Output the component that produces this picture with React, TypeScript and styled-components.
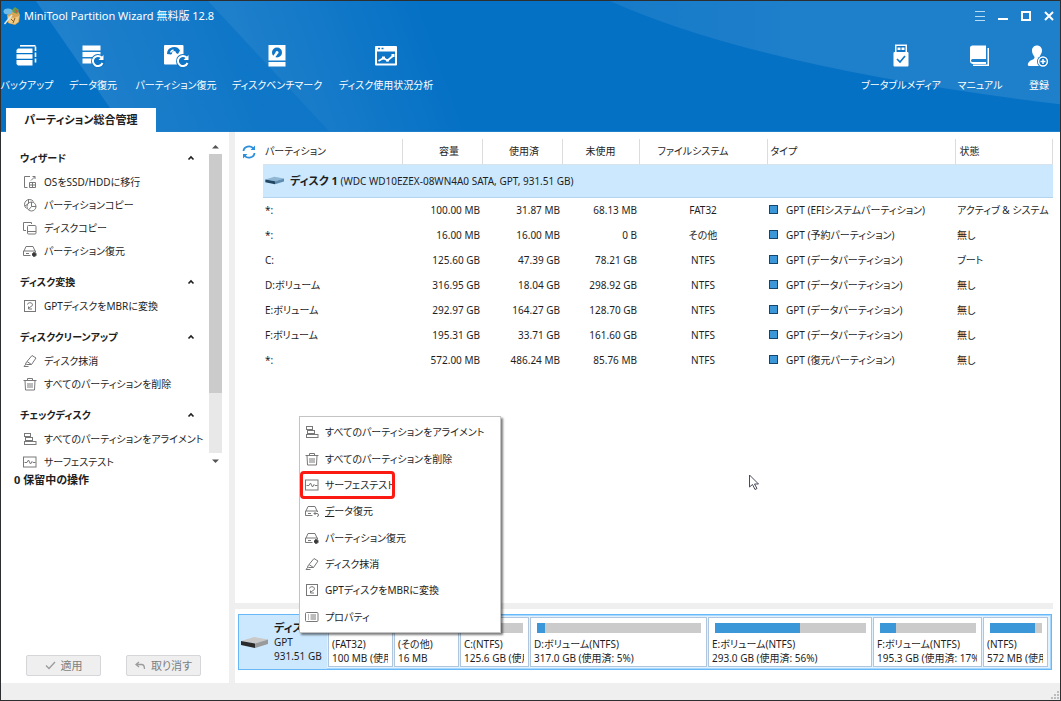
import React from "react";
import styled, { createGlobalStyle, css } from "styled-components";

const GlobalStyle = createGlobalStyle`
  *, *::before, *::after { box-sizing: border-box; }
  body {
    margin: 0;
    color: #1e1e1e;
    background: #fff;
    font-family: "Noto Sans", "Noto Sans CJK JP", sans-serif;
    font-size: 10px;
    line-height: 14px;
    font-feature-settings: "palt";
  }
  button { font: inherit; font-feature-settings: inherit; color: inherit; border: 0; padding: 0; background: none; }
  ul { list-style: none; margin: 0; padding: 0; }
  svg { display: block; flex: none; }
`;

const Window = styled.div`
  min-height: 100vh;
  display: flex;
  flex-direction: column;
  position: relative;
  border: 1px solid #2c2e30;
`;

/* ---------- header ---------- */

const Header = styled.header`
  position: relative;
  height: 131px;
  background: #0571c5;
  border-bottom: 1px solid #1f7fcb;
  color: #fff;
  display: flex;
  flex-direction: column;
`;

const Backdrop = styled.svg`
  position: absolute;
  inset: 0;
  width: 100%;
  height: 100%;
`;

const TitleBar = styled.div`
  position: relative;
  display: flex;
  align-items: center;
  height: 30px;
  padding: 0 5px 0 2px;
  gap: 3px;
`;

const Title = styled.h1`
  flex: 1;
  margin: 0;
  font-size: 11px;
  font-weight: 400;
  white-space: nowrap;
`;

const WindowButtons = styled.div`
  display: flex;
  gap: 11px;
`;

const Toolbar = styled.nav`
  position: relative;
  display: flex;
  height: 77px;
  justify-content: space-between;
  padding: 13px 1px 0 0;
`;

const ToolGroup = styled.div`
  display: flex;
  gap: 12px;
`;

const Tool = styled.button<{ $width: number }>`
  width: ${(p) => p.$width}px;
  height: 48px;
  display: flex;
  flex-direction: column;
  align-items: center;
  justify-content: space-between;
  white-space: nowrap;
`;

const Tab = styled.button`
  position: relative;
  align-self: flex-start;
  width: 150px;
  height: 24px;
  margin: auto 0 -1px 5px;
  background: #fff;
  color: #1e1e1e;
  font-size: 11px;
  font-weight: 700;
`;

/* ---------- body ---------- */

const Body = styled.div`
  flex: 1;
  display: grid;
  grid-template-columns: 228px 6px minmax(0, 1fr);
`;

const Splitter = styled.div`
  background: #efefef;
`;

const Sidebar = styled.aside`
  display: flex;
  flex-direction: column;
`;

const NavArea = styled.div`
  display: flex;
  height: 339px;
  padding-right: 7px;
`;

const NavGroups = styled.div`
  flex: 1;
  padding-top: 13px;
  overflow: hidden;
`;

const NavGroup = styled.section`
  margin-bottom: 7px;
`;

const NavHeading = styled.button`
  display: flex;
  justify-content: space-between;
  align-items: center;
  width: 100%;
  height: 25px;
  padding: 0 14px 0 19px;
  font-weight: 700;
`;

const NavItem = styled.button`
  display: flex;
  align-items: center;
  gap: 7px;
  height: 23px;
  padding-left: 22px;
  white-space: nowrap;
`;

const ScrollBar = styled.div`
  width: 13px;
  display: flex;
  flex-direction: column;
  align-items: center;
  padding-top: 12px;
`;

const ScrollTrack = styled.div`
  width: 13px;
  height: 299px;
  margin: 5px 0 6px;
  background: #e8e8e8;
`;

const ScrollThumb = styled.div`
  height: 239px;
  background: #cbcbcb;
`;

const Pending = styled.p`
  flex: 1;
  margin: 0;
  padding: 2px 0 0 13px;
  font-size: 11px;
  font-weight: 700;
`;

const Actions = styled.div`
  display: flex;
  gap: 25px;
  padding: 0 0 7px 25px;
`;

const ActionButton = styled.button`
  display: flex;
  align-items: center;
  justify-content: center;
  gap: 5px;
  width: 75px;
  height: 21px;
  border: 1px solid #d5d5da;
  border-radius: 2px;
  background: #efefef;
  color: #7e7e7e;
  font-size: 11px;
`;

const Main = styled.main`
  display: flex;
  flex-direction: column;
  padding-right: 7px;
`;

const TableArea = styled.div`
  flex: 1;
  display: grid;
  grid-template-columns: 28px minmax(0, 1fr);
  align-items: start;
  padding-top: 7px;
`;

const RefreshButton = styled.button`
  height: 25px;
  padding-left: 7px;
`;

const Table = styled.table`
  width: 100%;
  table-layout: fixed;
  border-collapse: collapse;
  white-space: nowrap;
`;

type Align = "left" | "center" | "right";

const HeadCell = styled.th<{ $align: Align; $pad: string }>`
  height: 25px;
  padding: ${(p) => p.$pad};
  border-right: 1px solid #dcdcdc;
  border-bottom: 1px solid #d6e3ef;
  text-align: ${(p) => p.$align};
  font-weight: 400;
`;

const DiskCell = styled.td`
  height: 33px;
  padding: 0 2px;
  background: #cce8ff;
  border-bottom: 1px solid #b3d4ee;
`;

const DiskTitle = styled.div`
  display: flex;
  align-items: center;
  gap: 5px;
`;

const DiskName = styled.b`
  font-size: 11px;
`;

const Cell = styled.td<{ $align?: Align }>`
  height: 25px;
  padding: 0 2px;
  text-align: ${(p) => p.$align ?? "left"};
  overflow: hidden;
`;

const TypeLabel = styled.span`
  display: flex;
  align-items: center;
  gap: 8px;
  &::before {
    content: "";
    width: 9px;
    height: 9px;
    border: 1px solid #14456b;
    background: #3b97d8;
  }
`;

const HSplitter = styled.div`
  height: 6px;
  background: #efefef;
`;

const DiskMap = styled.section`
  display: grid;
  grid-template-columns: 88px minmax(0, 1fr);
  height: 56px;
  margin: 5px 1px 13px 3px;
  border: 1px solid #66b8f8;
  background: #e3f2ff;
  box-shadow: inset 0 0 0 1px #a9d8ff;
`;

const DiskLabel = styled.div`
  display: flex;
  align-items: center;
  gap: 5px;
  padding-left: 2px;
  background: #cce8ff;
  white-space: nowrap;
`;

const Blocks = styled.div`
  display: grid;
  grid-template-columns: 65fr 65fr 69fr 177fr 164fr 109fr 65fr;
  gap: 1px;
  padding: 2px 3px 2px 1px;
`;

const Block = styled.div`
  min-width: 0;
  border: 1px solid #b0c6de;
  background: #fff;
  padding: 5px 4px 0 3px;
  white-space: nowrap;
`;

const BlockText = styled.div`
  overflow: hidden;
`;

const Usage = styled.div`
  height: 10px;
  margin: 0 1px 4px 3px;
  background: #cbcbcb;
`;

const UsageFill = styled.div`
  height: 100%;
  background: #3b97d8;
`;

const StatusBar = styled.footer`
  display: flex;
  justify-content: flex-end;
  align-items: flex-end;
  height: 17px;
  background: #efefef;
`;

/* ---------- floating parts ---------- */

const Menu = styled.ul`
  position: absolute;
  left: 298px;
  top: 415px;
  width: 202px;
  height: 217px;
  display: grid;
  grid-auto-rows: 1fr;
  padding: 2px 0;
  border: 1px solid #c4c4c4;
  background: #fff;
  box-shadow: 2px 2px 2px rgba(0, 0, 0, 0.5);
`;

const MenuItem = styled.li<{ $marked?: boolean }>`
  position: relative;
  display: flex;
  ${(p) =>
    p.$marked &&
    css`
      &::after {
        content: "";
        position: absolute;
        inset: -1px auto -1px 0;
        width: 95px;
        border: 3px solid #fb1a12;
        border-radius: 4px;
        pointer-events: none;
      }
    `}
`;

const MenuButton = styled.button`
  flex: 1;
  display: flex;
  align-items: center;
  gap: 6px;
  padding-left: 5px;
  white-space: nowrap;
`;

const Pointer = styled.svg`
  position: absolute;
  left: 747px;
  top: 473px;
`;

/* ---------- line icons ---------- */

type IconName = "migrate" | "pcopy" | "dcopy" | "precover" | "drecover" | "convert" | "wipe" | "trash" | "align" | "surface" | "props";

const glyphs: Record<IconName, React.ReactNode> = {
  migrate: (
    <>
      <path d="M7 1.5H1.5v11h3" />
      <path d="M8 5.500l4-4M9.5 1.500h2.500V4M6.500 7.500h6v5h-6zM6.500 10h6M9.500 7.500v5" />
    </>
  ),
  pcopy: (
    <>
      <path d="M3.500 10.500A5 5 0 1 1 10.500 3.500" />
      <circle cx="8.500" cy="8.500" r="4.500" />
      <path d="M8.500 4v4.500H13M8.500 8.500L5.500 12M5.500 1v4.500L2 8" />
    </>
  ),
  dcopy: (
    <>
      <path d="M3 9.500H.500v-8h8V3" />
      <rect x="4.500" y="4.500" width="8.500" height="8.500" rx="1" />
      <path d="M4.500 10.500H13" />
    </>
  ),
  precover: (
    <>
      <path d="M1 7l2-4.500h7L12 7M.500 7v4.500h7M.500 7H12.500v1.500M3 9.500h3" />
      <path d="M9 10.500h4.500M11.200 8.300v4.400" stroke="#3a3a3a" strokeWidth="2.400" />
    </>
  ),
  drecover: (
    <>
      <path d="M1 7l2-4.500h7L12 7M.500 7v4.500h7M.500 7H12.500v1M3 9.500h3" />
      <path d="M9 9.500h3a1.500 1.500 0 0 1 0 3M9 9.500L10.500 8M9 9.500l1.500 1.500" />
    </>
  ),
  convert: (
    <>
      <rect x="1.500" y="1.500" width="11" height="11" />
      <path d="M4.500 5.500a2.500 2 0 1 1 3.500 2L6 9M5.500 7.500V10H9" />
    </>
  ),
  wipe: <path d="M4 7.500L9 1.500l4 2.500-4.500 6.500H4L2.500 9.500zM4 7.500l4.500 3M3 10L1 12.500H5.500" />,
  trash: (
    <>
      <path d="M.500 3.500h13M4.500 3.500v-2h5v2M2 3.500l.500 9.500h9l.500-9.500" />
      <path d="M5 6v5M7 6v5M9 6v5" />
    </>
  ),
  align: (
    <>
      <rect x="1.500" y="1.500" width="6" height="3" />
      <rect x="2.500" y="5.500" width="7" height="3" />
      <rect x="1.500" y="9.500" width="11.500" height="3" />
    </>
  ),
  surface: (
    <>
      <rect x=".500" y="2" width="12.500" height="10" />
      <path d="M1.500 7.500h2.500l1.500-2.500 2 4 1.500-2.500 1 1h2.500" />
    </>
  ),
  props: (
    <>
      <rect x=".500" y="2.500" width="12.500" height="9" rx="1" />
      <path d="M3 5h1M3 7h1M3 9h1M5.500 5H11M5.500 7H11M5.500 9H11" />
    </>
  ),
};

const LineIcon = ({ name }: { name: IconName }) => (
  <svg width="14" height="14" viewBox="0 0 14 14" fill="none" stroke="#787878" strokeWidth="1" aria-hidden="true">
    {glyphs[name]}
  </svg>
);

const Chevron = () => (
  <svg width="8" height="6" viewBox="0 0 8 6" fill="none" stroke="#1e1e1e" strokeWidth="1.600">
    <path d="M1.500 4.500L4 2l2.500 2.500" />
  </svg>
);

/* ---------- toolbar icons ---------- */

const BLUE = "#0f75c7";

const toolIcons = {
  backup: (
    <>
      <path d="M5 1.800h15.500" fill="none" stroke="#fff" strokeWidth="1.600" />
      <path d="M20.500 2.500v4.500M20.500 8.500V13M20.500 14.500V18.500" fill="none" stroke="#fff" strokeWidth="1.600" />
      <path d="M3 4.500h14.500v4.500H1.500V6zM1.500 10.200h16v4.600h-16zM1.500 16h16v5.500H3l-1.500-1.500z" fill="#fff" />
    </>
  ),
  data: (
    <>
      <path d="M1.500 1.500h18v5h-18zM1.500 8h18v5h-18zM1.500 14.500h11v5h-11z" fill="#fff" />
      <circle cx="17" cy="17" r="7" fill={BLUE} />
      <path d="M20.500 13.500a5 5 0 1 0 1 5.500" fill="none" stroke="#fff" strokeWidth="2" />
      <path d="M22.500 11v5H17.500z" fill="#fff" />
    </>
  ),
  partition: (
    <>
      <rect x="0" y="1" width="19.500" height="19.500" rx="1" fill="#fff" />
      <path d="M3 10a7 7 0 0 1 13-3.500L14 10l-4-2-3 2.500z" fill={BLUE} />
      <path d="M6.500 8.500a4.500 4.500 0 0 1 3-2.500" fill="none" stroke="#fff" strokeWidth="1.500" />
      <circle cx="10" cy="9" r="2" fill="#fff" />
      <circle cx="19" cy="17" r="7" fill={BLUE} />
      <path d="M22.500 13.500a5 5 0 1 0 1 5.500" fill="none" stroke="#fff" strokeWidth="2" />
      <path d="M24.500 11v5H19.500z" fill="#fff" />
    </>
  ),
  bench: (
    <>
      <path d="M3.500 1h17v15.500h-17zM3.500 18h17v4.500h-17z" fill="#fff" />
      <circle cx="12" cy="8.500" r="5" fill={BLUE} />
      <path d="M11.500 9.500L8.500 13.500" stroke="#fff" strokeWidth="2.500" />
      <circle cx="12" cy="8.500" r="1.500" fill="#fff" />
    </>
  ),
  usage: (
    <>
      <rect x="1" y="2" width="22" height="19.500" rx="1" fill="#fff" />
      <path d="M3 7.500h18v12H3z" fill={BLUE} />
      <path d="M4 4.500h2M7.500 4.500h2" stroke={BLUE} strokeWidth="1.500" />
      <path d="M4.500 17l5-3 4 2.500 6-5" fill="none" stroke="#fff" strokeWidth="1.800" />
      <path d="M8 12.500h3v3H8zM12 15h3v2.500h-3zM17.500 10h3v3h-3z" fill="#fff" />
    </>
  ),
  usb: (
    <>
      <path d="M6 .5h12v8H6z" fill="#fff" />
      <path d="M7.500 2h9v6h-9z" fill={BLUE} />
      <path d="M8.500 3.500h3V6h-3zM12.500 3.500h3V6h-3z" fill="#fff" />
      <rect x="4.500" y="8" width="15" height="14.500" rx="1" fill="#fff" />
      <path d="M8 15l3 3 5-6" fill="none" stroke={BLUE} strokeWidth="1.600" />
    </>
  ),
  manual: (
    <>
      <path d="M4.500 1.500H18V15H4.500a1.500 1.500 0 0 0 0 3H18v2H4.500A3 3 0 0 1 2 17V4a2.500 2.500 0 0 1 2.500-2.500z" fill="#fff" />
      <path d="M19.500 4H21v18H5v-1.500h14.500z" fill="#fff" />
    </>
  ),
  register: (
    <>
      <path d="M10 1.500c3 0 5 2.200 5 5 0 2.400-1.300 4-2 5.500-.5 1.500.5 2.500 2 3.200V22H2c-1 0-1.500-1-1-2.500.8-2.500 3.500-3.500 5-4 1.500-.7 2-2 1-3.500-1-1.400-2-3-2-5.500 0-2.800 2-5 5-5z" fill="#fff" />
      <circle cx="16" cy="17.500" r="6" fill={BLUE} />
      <circle cx="16" cy="17.500" r="4.400" fill="none" stroke="#fff" strokeWidth="1.500" />
      <path d="M13.500 17.500h5M16 15v5" stroke="#fff" strokeWidth="1.500" />
    </>
  ),
};

type ToolName = keyof typeof toolIcons;
type ToolDef = [ToolName, string, number];

const leftTools: ToolDef[] = [
  ["backup", "バックアップ", 52],
  ["data", "データ復元", 56],
  ["partition", "パーティション復元", 86],
  ["bench", "ディスクベンチマーク", 92],
  ["usage", "ディスク使用状況分析", 102],
];
const rightTools: ToolDef[] = [
  ["usb", "ブータブルメディア", 80],
  ["manual", "マニュアル", 54],
  ["register", "登録", 40],
];

const renderTool = ([icon, label, width]: ToolDef) => (
  <Tool key={icon} $width={width}>
    <svg width="24" height="24" viewBox="0 0 24 24" overflow="visible" aria-hidden="true">
      {toolIcons[icon]}
    </svg>
    {label}
  </Tool>
);

/* ---------- data ---------- */

const groups: { title: string; items: [IconName, string][] }[] = [
  {
    title: "ウィザード",
    items: [
      ["migrate", "OSをSSD/HDDに移行"],
      ["pcopy", "パーティションコピー"],
      ["dcopy", "ディスクコピー"],
      ["precover", "パーティション復元"],
    ],
  },
  { title: "ディスク変換", items: [["convert", "GPTディスクをMBRに変換"]] },
  {
    title: "ディスククリーンアップ",
    items: [
      ["wipe", "ディスク抹消"],
      ["trash", "すべてのパーティションを削除"],
    ],
  },
  {
    title: "チェックディスク",
    items: [
      ["align", "すべてのパーティションをアライメント"],
      ["surface", "サーフェステスト"],
    ],
  },
];

const columns: { label: string; width?: number; align: Align; pad: string }[] = [
  { label: "パーティション", width: 139, align: "left", pad: "0 2px" },
  { label: "容量", width: 80, align: "center", pad: "0 0 0 14px" },
  { label: "使用済", width: 80, align: "center", pad: "0 0 0 4px" },
  { label: "未使用", width: 77, align: "center", pad: "0" },
  { label: "ファイルシステム", width: 128, align: "center", pad: "0 20px 0 0" },
  { label: "タイプ", width: 188, align: "left", pad: "0 3px" },
  { label: "状態", align: "left", pad: "0 4px" },
];

const partitions = [
  ["*:", "100.00 MB", "31.87 MB", "68.13 MB", "FAT32", "GPT (EFIシステムパーティション)", "アクティブ & システム"],
  ["*:", "16.00 MB", "16.00 MB", "0 B", "その他", "GPT (予約パーティション)", "無し"],
  ["C:", "125.60 GB", "47.39 GB", "78.21 GB", "NTFS", "GPT (データパーティション)", "ブート"],
  ["D:ボリューム", "316.95 GB", "18.04 GB", "298.92 GB", "NTFS", "GPT (データパーティション)", "無し"],
  ["E:ボリューム", "292.97 GB", "164.27 GB", "128.70 GB", "NTFS", "GPT (データパーティション)", "無し"],
  ["F:ボリューム", "195.31 GB", "33.71 GB", "161.60 GB", "NTFS", "GPT (データパーティション)", "無し"],
  ["*:", "572.00 MB", "486.24 MB", "85.76 MB", "NTFS", "GPT (復元パーティション)", "無し"],
];

const blocks: [string, string, number][] = [
  ["(FAT32)", "100 MB (使用済: 31%)", 31],
  ["(その他)", "16 MB", 100],
  ["C:(NTFS)", "125.6 GB (使用済: 37%)", 37],
  ["D:ボリューム(NTFS)", "317.0 GB (使用済: 5%)", 5],
  ["E:ボリューム(NTFS)", "293.0 GB (使用済: 56%)", 56],
  ["F:ボリューム(NTFS)", "195.3 GB (使用済: 17%)", 17],
  ["(NTFS)", "572 MB (使用済: 85%)", 86],
];

const menuItems: [IconName, React.ReactNode, boolean?][] = [
  ["align", "すべてのパーティションをアライメント"],
  ["trash", "すべてのパーティションを削除"],
  ["surface", "サーフェステスト", true],
  ["drecover", <span key="d"><u>デ</u>ータ復元</span>],
  ["precover", "パーティション復元"],
  ["wipe", "ディスク抹消"],
  ["convert", "GPTディスクをMBRに変換"],
  ["props", "プロパティ"],
];

const HeaderBackdrop = () => (
  <Backdrop viewBox="0 0 1059 131" preserveAspectRatio="none" aria-hidden="true">
    <defs>
      <linearGradient id="beamA" gradientUnits="userSpaceOnUse" x1="60" y1="60" x2="220" y2="0">
        <stop offset="0" stopColor="#fff" stopOpacity=".11" />
        <stop offset="1" stopColor="#fff" stopOpacity="0.04" />
      </linearGradient>
      <linearGradient id="beamB" gradientUnits="userSpaceOnUse" x1="250" y1="60" x2="420" y2="0">
        <stop offset="0" stopColor="#fff" stopOpacity=".1" />
        <stop offset="1" stopColor="#fff" stopOpacity="0" />
      </linearGradient>
      <linearGradient id="beamC" x1="0" y1="0" x2="1" y2="0">
        <stop offset="0" stopColor="#fff" stopOpacity=".07" />
        <stop offset=".4" stopColor="#fff" stopOpacity=".1" />
      </linearGradient>
    </defs>
    <path d="M35 0H207L328 131H125z" fill="url(#beamA)" />
    <path d="M207 0H460V131H328z" fill="url(#beamB)" />
    <path d="M609 0Q760 68 1059 104V0z" fill="url(#beamC)" />
  </Backdrop>
);

const AppLogo = () => (
  <svg width="18" height="20" viewBox="0 0 18 20" aria-hidden="true">
    <path d="M4 9l5-4 3 2 3-2 2 4-1 7-4 3-7-2z" fill="#d9a552" />
    <path d="M5 10l6 2 5-2-1 6-3 2-6-1z" fill="#eecb86" />
    <path d="M8 5l4-4 4 3-2 4z" fill="#6c9b4b" />
    <path d="M12 3l3 2-2 2z" fill="#c8553a" />
    <ellipse cx="5" cy="5.500" rx="4.500" ry="3" fill="#6fbbe8" />
    <path d="M9 9L1.500 18" stroke="#d9e9f5" strokeWidth="1.500" />
    <path d="M8 13l3 3M12 12l-2 5" stroke="#8a5a23" />
  </svg>
);

const DriveIcon = ({ tint, width }: { tint: [string, string, string]; width: number }) => (
  <svg width={width} height={Math.round(width / 2.2)} viewBox="0 0 28 13" aria-hidden="true">
    <path d="M0 5L13 1l14 2.500-13 4z" fill={tint[0]} />
    <path d="M0 5l14 2.500V12L0 9z" fill={tint[1]} />
    <path d="M14 7.500l13-4V8l-13 4z" fill={tint[2]} />
  </svg>
);

export default function App() {
  return (
    <>
      <GlobalStyle />
      <Window>
        <Header>
          <HeaderBackdrop />
          <TitleBar>
            <AppLogo />
            <Title>MiniTool Partition Wizard 無料版 12.8</Title>
            <WindowButtons>
              <button aria-label="メニュー">
                <svg width="12" height="12" fill="none" stroke="#b9dcf5">
                  <path d="M1 1.500h10M1 6.500h10M1 10.500h10" />
                </svg>
              </button>
              <button aria-label="最小化">
                <svg width="12" height="12" fill="none" stroke="#fff" strokeWidth="2">
                  <path d="M1 9h10" />
                </svg>
              </button>
              <button aria-label="最大化">
                <svg width="12" height="12" fill="none" stroke="#fff" strokeWidth="2">
                  <path d="M2 2h8v8H2z" />
                </svg>
              </button>
              <button aria-label="閉じる">
                <svg width="12" height="12" fill="none" stroke="#fff" strokeWidth="2">
                  <path d="M2 2l8 8M10 2l-8 8" />
                </svg>
              </button>
            </WindowButtons>
          </TitleBar>
          <Toolbar>
            <ToolGroup>{leftTools.map(renderTool)}</ToolGroup>
            <ToolGroup>{rightTools.map(renderTool)}</ToolGroup>
          </Toolbar>
          <Tab>パーティション総合管理</Tab>
        </Header>

        <Body>
          <Sidebar>
            <NavArea>
              <NavGroups>
                {groups.map((g) => (
                  <NavGroup key={g.title}>
                    <NavHeading>
                      {g.title}
                      <Chevron />
                    </NavHeading>
                    <ul>
                      {g.items.map(([icon, label]) => (
                        <li key={label}>
                          <NavItem>
                            <LineIcon name={icon} />
                            {label}
                          </NavItem>
                        </li>
                      ))}
                    </ul>
                  </NavGroup>
                ))}
              </NavGroups>
              <ScrollBar>
                <svg width="7" height="5">
                  <path d="M0 4.500L3.500 1 7 4.500z" fill="#555" />
                </svg>
                <ScrollTrack>
                  <ScrollThumb />
                </ScrollTrack>
                <svg width="7" height="5">
                  <path d="M0 .5L3.500 4 7 .5z" fill="#555" />
                </svg>
              </ScrollBar>
            </NavArea>
            <Pending>0 保留中の操作</Pending>
            <Actions>
              <ActionButton>
                <svg width="11" height="9" fill="none" stroke="#9c9c9c" strokeWidth="1.300">
                  <path d="M1 4.500l3 3 6-6.500" />
                </svg>
                適用
              </ActionButton>
              <ActionButton>
                <svg width="11" height="9" fill="none" stroke="#9c9c9c" strokeWidth="1.300">
                  <path d="M4 1L1 3.500 4 6M1 3.500h5.500Q9.500 3.500 9.500 8" />
                </svg>
                取り消す
              </ActionButton>
            </Actions>
          </Sidebar>
          <Splitter />
          <Main>
            <TableArea>
              <RefreshButton aria-label="更新">
                <svg width="14" height="14" viewBox="0 0 14 14" fill="none" stroke="#2c8fdc" strokeWidth="1.800">
                  <path d="M1.500 6a5.500 5 0 0 1 10-2.500M12.500 8a5.500 5 0 0 1-10 2.500" />
                  <path d="M13 .5V5H8.500zM1 13.500V9h4.500z" fill="#2c8fdc" stroke="none" />
                </svg>
              </RefreshButton>
              <Table>
                <colgroup>
                  {columns.map((c) => (
                    <col key={c.label} width={c.width} />
                  ))}
                </colgroup>
                <thead>
                  <tr>
                    {columns.map((c) => (
                      <HeadCell key={c.label} $align={c.align} $pad={c.pad}>
                        {c.label}
                      </HeadCell>
                    ))}
                  </tr>
                </thead>
                <tbody>
                  <tr>
                    <DiskCell colSpan={7}>
                      <DiskTitle>
                        <DriveIcon width={20} tint={["#8fb6d3", "#1f4663", "#5d8db0"]} />
                        <span>
                          <DiskName>ディスク 1</DiskName> (WDC WD10EZEX-08WN4A0 SATA, GPT, 931.51 GB)
                        </span>
                      </DiskTitle>
                    </DiskCell>
                  </tr>
                  {partitions.map(([name, size, used, free, fs, type, state], i) => (
                    <tr key={i}>
                      <Cell>{name}</Cell>
                      <Cell $align="right">{size}</Cell>
                      <Cell $align="right">{used}</Cell>
                      <Cell $align="right">{free}</Cell>
                      <Cell $align="center">{fs}</Cell>
                      <Cell>
                        <TypeLabel>{type}</TypeLabel>
                      </Cell>
                      <Cell>{state}</Cell>
                    </tr>
                  ))}
                </tbody>
              </Table>
            </TableArea>
            <HSplitter />
            <DiskMap>
              <DiskLabel>
                <DriveIcon width={28} tint={["#c9c9c9", "#2a2a2a", "#9a9a9a"]} />
                <div>
                  <DiskName>ディスク 1</DiskName>
                  <div>GPT</div>
                  <div>931.51 GB</div>
                </div>
              </DiskLabel>
              <Blocks>
                {blocks.map(([name, info, pct]) => (
                  <Block key={info}>
                    <Usage>
                      <UsageFill style={{ width: `${pct}%` }} />
                    </Usage>
                    <BlockText>{name}</BlockText>
                    <BlockText>{info}</BlockText>
                  </Block>
                ))}
              </Blocks>
            </DiskMap>
          </Main>
        </Body>

        <StatusBar>
          <svg width="9" height="9" fill="#bdbdbd">
            <path d="M6 0h2v2H6zM3 3h2v2H3zM6 3h2v2H6zM0 6h2v2H0zM3 6h2v2H3zM6 6h2v2H6z" />
          </svg>
        </StatusBar>

        <Menu>
          {menuItems.map(([icon, label, marked]) => (
            <MenuItem key={icon} $marked={marked}>
              <MenuButton>
                <LineIcon name={icon} />
                {label}
              </MenuButton>
            </MenuItem>
          ))}
        </Menu>
        <Pointer width="12" height="18" fill="#fff" stroke="#4a4a5c" aria-hidden="true">
          <path d="M1.500 1v12l3-2.500 2.500 5 2-1-2.500-4.500h4z" />
        </Pointer>
      </Window>
    </>
  );
}
